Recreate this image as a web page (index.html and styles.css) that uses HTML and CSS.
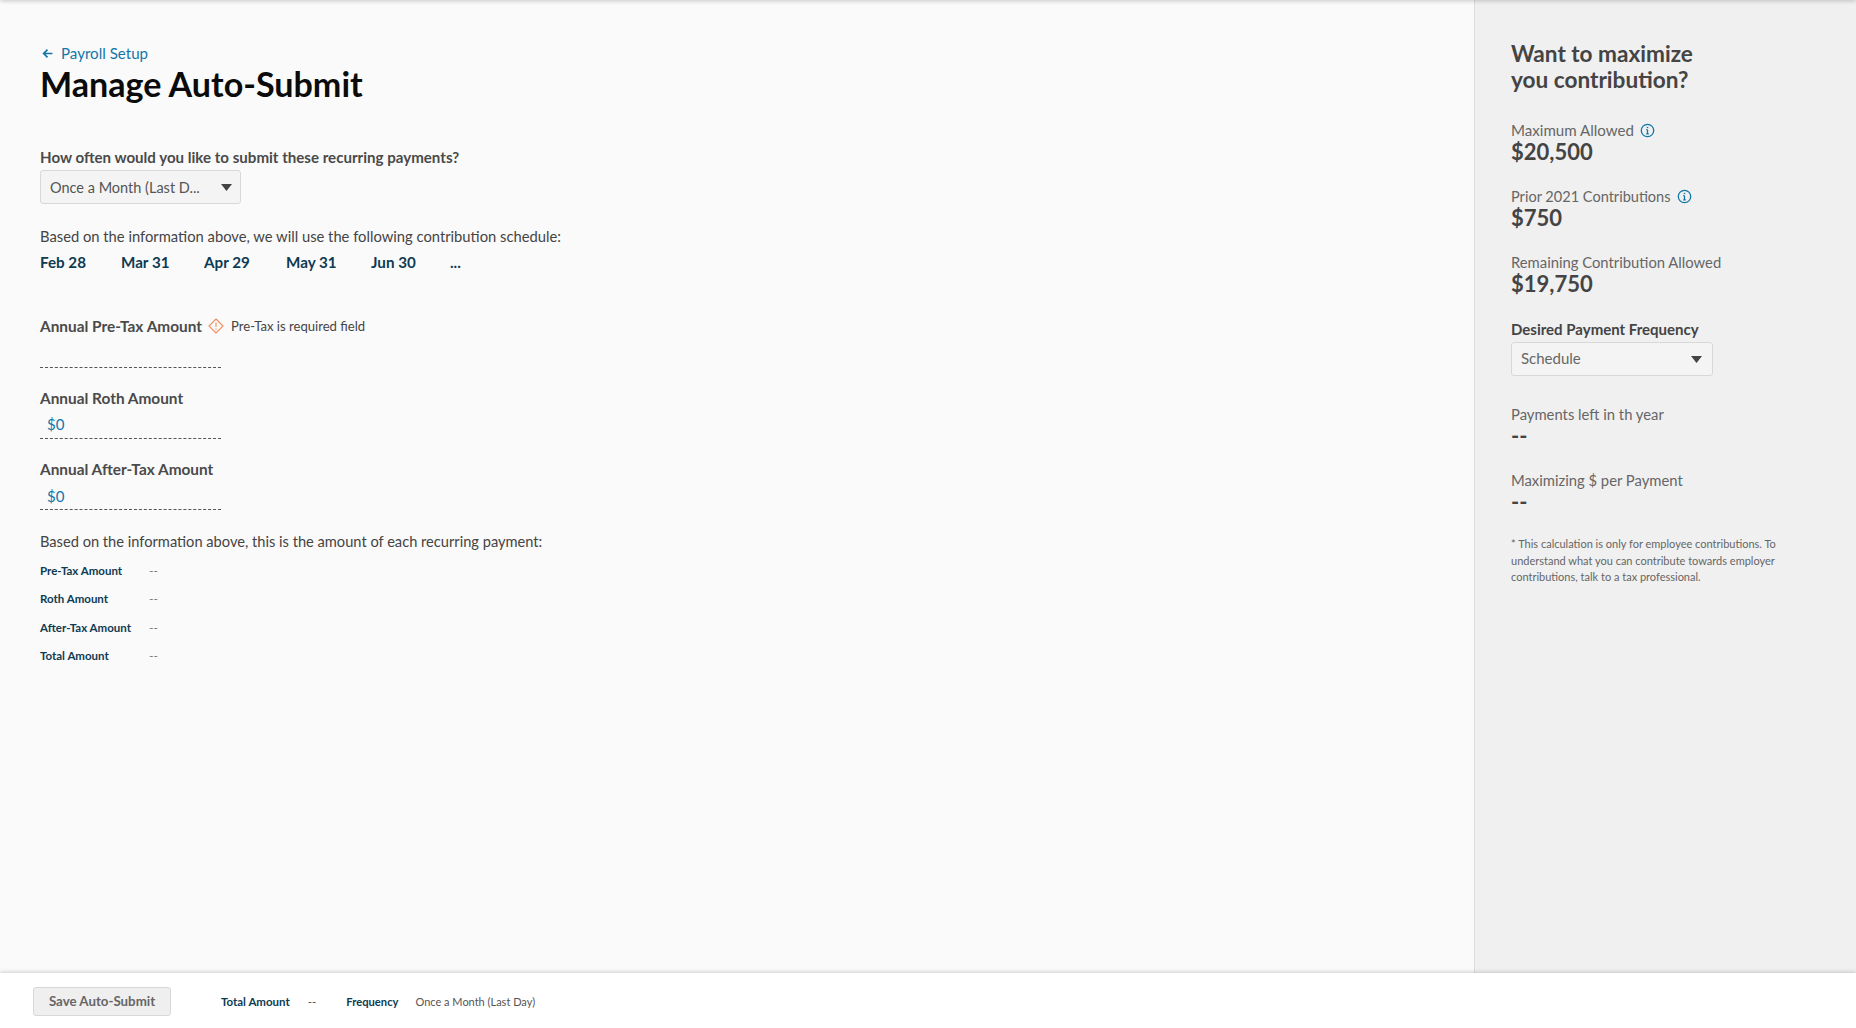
FILE: index.html
```html
<!DOCTYPE html>
<html lang="en">
<head>
<meta charset="utf-8">
<title>Manage Auto-Submit</title>
<link rel="stylesheet" href="styles.css">
</head>
<body>
<div class="page">
  <div class="columns">
    <main class="main">
      <a class="back" href="#"><svg class="back-icon" viewBox="0 0 10 10"><path d="M9.500 5H1.500M5 1.500L1.500 5 5 8.500"/></svg>Payroll Setup</a>
      <h1 class="title">Manage Auto-Submit</h1>
      <p class="question">How often would you like to submit these recurring payments?</p>
      <div class="select select-freq"><span>Once a Month (Last D...</span><svg class="caret" viewBox="0 0 11 7"><path d="M0 0h11L5.500 7z"/></svg></div>
      <p class="copy schedule-copy">Based on the information above, we will use the following contribution schedule:</p>
      <ul class="dates">
        <li class="date d1">Feb 28</li>
        <li class="date d2">Mar 31</li>
        <li class="date d3">Apr 29</li>
        <li class="date d4">May 31</li>
        <li class="date d5">Jun 30</li>
        <li class="date">...</li>
      </ul>
      <div class="field field-first">
        <div class="field-label">Annual Pre-Tax Amount
          <svg class="warn" viewBox="0 0 16 16"><path d="M8 1l7 7-7 7-7-7z"/><path d="M8 4.500v4.500M8 10.500v1.200"/></svg>
          <span class="field-error">Pre-Tax is required field</span></div>
        <div class="amount amount-first"></div>
      </div>
      <div class="field">
        <div class="field-label">Annual Roth Amount</div>
        <div class="amount">$0</div>
      </div>
      <div class="field">
        <div class="field-label">Annual After-Tax Amount</div>
        <div class="amount amount-last">$0</div>
      </div>
      <p class="copy payment-copy">Based on the information above, this is the amount of each recurring payment:</p>
      <dl class="summary">
        <div class="row"><dt>Pre-Tax Amount</dt><dd>--</dd></div>
        <div class="row"><dt>Roth Amount</dt><dd>--</dd></div>
        <div class="row"><dt>After-Tax Amount</dt><dd>--</dd></div>
        <div class="row"><dt>Total Amount</dt><dd>--</dd></div>
      </dl>
    </main>
    <aside class="side">
      <h2 class="side-title">Want to maximize<br>you contribution?</h2>
      <div class="stat stat-first">
        <div class="stat-label label-max">Maximum Allowed<svg class="info" viewBox="0 0 14 14"><circle cx="7" cy="7" r="5.800"/><path d="M7 6.200v4M5.800 10.200h2.400M5.800 6.200H7"/><path class="dot" d="M7 3.600v1.200"/></svg></div>
        <div class="stat-value">$20,500</div>
      </div>
      <div class="stat">
        <div class="stat-label label-prior">Prior 2021 Contributions<svg class="info" viewBox="0 0 14 14"><circle cx="7" cy="7" r="5.800"/><path d="M7 6.200v4M5.800 10.200h2.400M5.800 6.200H7"/><path class="dot" d="M7 3.600v1.200"/></svg></div>
        <div class="stat-value">$750</div>
      </div>
      <div class="stat">
        <div class="stat-label">Remaining Contribution Allowed</div>
        <div class="stat-value">$19,750</div>
      </div>
      <div class="side-field">Desired Payment Frequency</div>
      <div class="select select-side"><span>Schedule</span><svg class="caret" viewBox="0 0 11 7"><path d="M0 0h11L5.500 7z"/></svg></div>
      <div class="stat stat-after">
        <div class="stat-label">Payments left in th year</div>
        <div class="stat-value">--</div>
      </div>
      <div class="stat">
        <div class="stat-label">Maximizing $ per Payment</div>
        <div class="stat-value">--</div>
      </div>
      <p class="note">* This calculation is only for employee contributions. To understand what you can contribute towards employer contributions, talk to a tax professional.</p>
    </aside>
  </div>
  <footer class="footer">
    <button class="save" type="button">Save Auto-Submit</button>
    <span class="foot-key foot-total">Total Amount</span>
    <span class="foot-val foot-dash">--</span>
    <span class="foot-key foot-freq">Frequency</span>
    <span class="foot-val foot-once">Once a Month (Last Day)</span>
  </footer>
</div>
</body>
</html>
```
FILE: styles.css
```css
* { box-sizing: border-box; }
html, body { margin: 0; height: 100%; }
body {
  font-family: "Lato", "Noto Sans", sans-serif;
  color: #444;
  background: #fafafa;
  overflow: hidden;
}
.page { height: 1028px; display: flex; flex-direction: column; position: relative; }
.page::before {
  content: "";
  position: absolute; left: 0; right: 0; top: -4px; height: 4px;
  box-shadow: 0 1px 4px rgba(0,0,0,.22);
}
.columns { flex: 1; display: flex; min-height: 0; }
.main { flex: 1; padding: 43px 0 0 40px; background: #fafafa; }
.side { width: 382px; padding: 41px 0 0 36px; background: #f0f0f0; border-left: 1px solid #dcdcdc; }

.back { display: flex; align-items: center; height: 20px; font-size: 15.100px; color: #1276a8; text-decoration: none; }
.back-icon { width: 11px; height: 11px; margin: 0 8px 0 2px; fill: none; stroke: #1276a8; stroke-width: 1.500; }
.title { margin: -1px 0 0; font-size: 34.100px; line-height: 44px; font-weight: 700; color: #0b0b0b; }
.question { margin: 41px 0 3px; font-size: 15.100px; line-height: 20px; font-weight: 700; color: #4a4a4a; }
.select {
  display: flex; align-items: center; justify-content: space-between;
  height: 34px; background: #f4f4f4; border: 1px solid #d8d8d8; border-radius: 3px;
  font-size: 15px; color: #555;
}
.select-freq { width: 201px; padding: 0 8px 0 9px; font-size: 14.500px; }
.select-side { width: 202px; padding: 0 10px 2px 9px; color: #666; }
.caret { width: 11px; height: 7px; fill: #444; }
.select-side .caret { margin-top: 2px; }
.copy { margin: 0; font-size: 14.750px; line-height: 20px; color: #444; }
.schedule-copy { margin-top: 22px; }
.dates { display: flex; list-style: none; margin: 6px 0 0; padding: 0; }
.date { font-size: 15.200px; line-height: 20px; font-weight: 700; color: #0e3a52; }
.d1 { width: 81px; } .d2 { width: 83px; } .d3 { width: 82px; } .d4 { width: 85px; } .d5 { width: 79px; }
.field { width: 181px; margin-top: 20px; }
.field-first { width: auto; margin-top: 44px; }
.field-label { display: flex; align-items: center; height: 20px; font-size: 15.400px; font-weight: 700; color: #4a4a4a; }
.warn { width: 16px; height: 16px; margin: 0 7px 0 6px; fill: none; stroke: #f08a5a; stroke-width: 1.100; }
.field-error { font-size: 13.100px; font-weight: 400; color: #444; }
.amount { width: 181px; height: 31px; padding: 6px 0 0 7px; font-size: 15px; line-height: 20px; color: #1276a8; border-bottom: 1px dashed #555; }
.amount-first { height: 32px; }
.amount-last { padding-top: 7px; }
.payment-copy { margin-top: 22px; font-size: 14.650px; }
.summary { margin: 4px 0 0; }
.row { display: flex; align-items: center; height: 28.500px; }
.row dt { width: 109px; font-size: 11.500px; font-weight: 700; color: #0e3a52; }
.row dd { margin: 0; font-size: 12px; color: #777; }

.side-title { margin: 0; font-size: 22.600px; line-height: 25.500px; font-weight: 700; color: #444; }
.stat { margin-top: 23px; }
.stat-first { margin-top: 28px; }
.stat-after { margin-top: 28px; }
.stat-label { display: flex; align-items: center; height: 20px; font-size: 14.800px; color: #666; }
.label-max { font-size: 15.100px; }
.label-prior { font-size: 14.550px; }
.stat-value { font-size: 22px; line-height: 22px; margin-top: 1px; font-weight: 700; color: #444; }
.info { width: 15px; height: 15px; margin-left: 6px; fill: none; stroke: #1276a8; stroke-width: 1.200; }
.info .dot { stroke-width: 1.400; }
.side-field { margin: 24px 0 3px; font-size: 15px; line-height: 20px; font-weight: 700; color: #444; }
.note { width: 268px; margin: 23px 0 0; font-size: 11px; line-height: 16.500px; color: #666; }

.footer {
  position: relative; display: flex; align-items: center;
  height: 55px; padding: 1px 0 0 33px; background: #fff;
  box-shadow: 0 -1px 4px rgba(0,0,0,.18);
}
.save {
  width: 138px; height: 29px; padding: 0; background: #efefef; border: 1px solid #d8d8d8; border-radius: 3px;
  font: 700 13.300px "Lato", "Noto Sans", sans-serif; color: #666;
}
.foot-key { font-size: 11.500px; font-weight: 700; color: #0e3a52; }
.foot-val { font-size: 11.500px; color: #555; }
.foot-once { font-size: 11px; }
.foot-total { margin-left: 50px; }
.foot-dash { margin-left: 18px; }
.foot-freq { margin-left: 30px; margin-right: 17px; font-size: 11.200px; }
```
